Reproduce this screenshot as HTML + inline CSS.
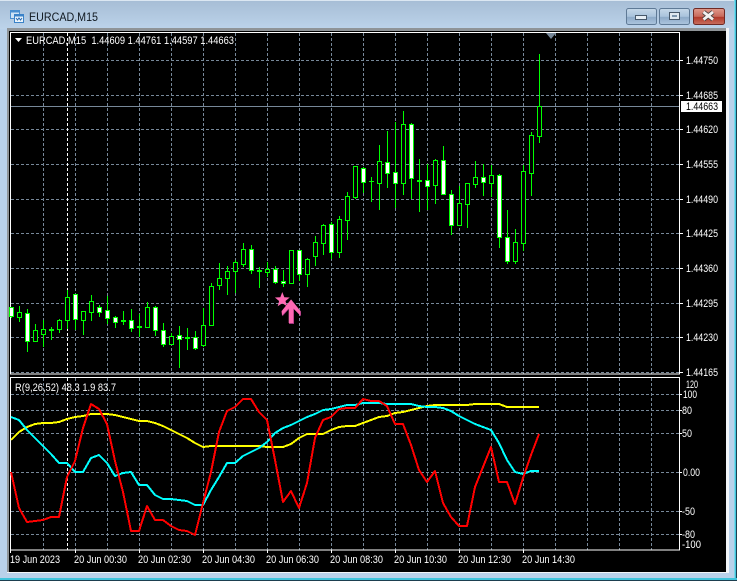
<!DOCTYPE html>
<html><head><meta charset="utf-8"><style>
html,body{margin:0;padding:0;background:#b9d1ea}
svg{display:block}
text{font-family:"Liberation Sans",sans-serif;font-size:11px;fill:#fff}
</style></head><body>
<svg width="737" height="581" viewBox="0 0 737 581" xmlns="http://www.w3.org/2000/svg">
<defs>
<linearGradient id="t" x1="0" y1="0" x2="0" y2="1"><stop offset="0" stop-color="#a6bdd5"/><stop offset="1" stop-color="#bcd3ea"/></linearGradient>
<linearGradient id="b1" x1="0" y1="0" x2="0" y2="1"><stop offset="0" stop-color="#c6d8e9"/><stop offset=".5" stop-color="#a9c3dc"/><stop offset=".55" stop-color="#8daac8"/><stop offset="1" stop-color="#adc6de"/></linearGradient>
<linearGradient id="b2" x1="0" y1="0" x2="0" y2="1"><stop offset="0" stop-color="#e09a8c"/><stop offset=".5" stop-color="#c86a5c"/><stop offset=".55" stop-color="#b2392a"/><stop offset="1" stop-color="#c8705f"/></linearGradient>
</defs>
<rect width="737" height="581" fill="#b9d1ea"/>
<rect width="737" height="29" fill="url(#t)"/>
<rect x="0" y="0" width="737" height="1" fill="#dbe7f2"/>
<rect x="735" y="0" width="1" height="581" fill="#3fc4dc"/>
<rect x="734" y="0" width="1" height="581" fill="#7fd6e8"/>
<rect x="736" y="0" width="1" height="581" fill="#1d3f50"/>
<rect x="0" y="578" width="737" height="2" fill="#3fc4dc"/>
<rect x="0" y="580" width="737" height="1" fill="#1d3f50"/>
<rect x="7" y="28" width="722" height="545" fill="#f2f5f8"/>
<rect x="7" y="28" width="719" height="3" fill="#8f9498"/>
<rect x="7" y="28" width="2" height="544" fill="#8f9498"/>
<rect x="9" y="31" width="717" height="541" fill="#000"/>

<!-- title -->
<g>
<rect x="10.5" y="10.5" width="9" height="8" fill="#cfe3f5" stroke="#4a8fd0"/>
<rect x="10.5" y="10.5" width="9" height="2" fill="#4a8fd0"/>
<rect x="14.5" y="14.5" width="9" height="8" fill="#eaf4fc" stroke="#3a82c8"/>
<rect x="14.5" y="14.5" width="9" height="2" fill="#3a82c8"/>
<path d="M16 18l1.500 2 1.500-2 1.500 2 1.500-2" fill="none" stroke="#2a6ab0"/>
</g>
<text x="29" y="21" textLength="69" lengthAdjust="spacingAndGlyphs" style="font-size:12px;fill:#101820">EURCAD,M15</text>
<rect x="626.500" y="8.500" width="30" height="16" rx="2" fill="url(#b1)" stroke="#5f7a96"/>
<rect x="635.500" y="15.500" width="11" height="4" fill="#e6eef5" stroke="#47586a"/>
<rect x="659.500" y="8.500" width="30" height="16" rx="2" fill="url(#b1)" stroke="#5f7a96"/>
<rect x="669.500" y="12.500" width="10" height="7" fill="#dfe8f0" stroke="#47586a"/>
<rect x="672" y="15" width="5" height="2" fill="#7d96ae"/>
<rect x="693.500" y="8.500" width="31" height="16" rx="2" fill="url(#b2)" stroke="#6f2a25"/>
<path d="M703.500 12l9.500 7.500M713 12l-9.500 7.500" stroke="#47403f" stroke-width="4.600" fill="none"/>
<path d="M703.500 12l9.500 7.500M713 12l-9.500 7.500" stroke="#f2f0ef" stroke-width="2.800" fill="none"/>

<!-- grid -->
<g stroke="#778899" stroke-width="1" stroke-dasharray="3 2" fill="none">
<path d="M11 60.500H679M11 95.500H679M11 129.500H679M11 164.500H679M11 199.500H679M11 233.500H679M11 268.500H679M11 303.500H679M11 337.500H679M11 372.500H679"/>
<path d="M11 394.500H679M11 410.500H679M11 433.500H679M11 472.500H679M11 511.500H679M11 534.500H679"/>
<path d="M43.500 33V374M107.500 33V374M75.500 33V374M139.500 33V374M171.500 33V374M203.500 33V374M235.500 33V374M267.500 33V374M299.500 33V374M331.500 33V374M363.500 33V374M395.500 33V374M427.500 33V374M459.500 33V374M491.500 33V374M523.500 33V374M555.500 33V374M587.500 33V374M619.500 33V374M651.500 33V374"/>
<path d="M43.500 378V550M107.500 378V550M75.500 378V550M139.500 378V550M171.500 378V550M203.500 378V550M235.500 378V550M267.500 378V550M299.500 378V550M331.500 378V550M363.500 378V550M395.500 378V550M427.500 378V550M459.500 378V550M491.500 378V550M523.500 378V550M555.500 378V550M587.500 378V550M619.500 378V550M651.500 378V550"/>
</g>
<path d="M67.500 33V374M67.500 378V550" stroke="#fff" stroke-dasharray="3 2" fill="none"/>
<rect x="11" y="106" width="668" height="1" fill="#778899"/>

<!-- frames -->
<g fill="none" stroke="#fff">
<rect x="10.500" y="32.500" width="669" height="341.500"/>
<rect x="10.500" y="377.500" width="669" height="172.500"/>
<path d="M680 60.500h3M680 95.500h3M680 129.500h3M680 164.500h3M680 199.500h3M680 233.500h3M680 268.500h3M680 303.500h3M680 337.500h3M680 372.500h3M680 394.500h2M680 410.500h2M680 433.500h2M680 472.500h2M680 511.500h2M680 534.500h2M10.500 550v3M75.500 550v3M139.500 550v3M203.500 550v3M267.500 550v3M331.500 550v3M395.500 550v3M459.500 550v3M523.500 550v3"/>
</g>
<path d="M546 33h10l-5 6z" fill="#778899"/>

<!-- candle wicks -->
<path stroke="#00ff00" stroke-width="1" fill="none" d="M11.500 316v2M19.500 306v16M27.500 309v43M35.500 324v17M43.500 320v27M51.500 327v13M59.500 319v14M67.500 290v39M75.500 294v36M83.500 311v24M91.500 295v26M99.500 305v12M107.500 296v28M115.500 316v12M123.500 311v14M131.500 309v23M139.500 314v23M147.500 302v25M155.500 306v30M163.500 323v24M171.500 333v11M179.500 326v42M187.500 328v22M195.500 331v19M203.500 308v39M211.500 283v43M219.500 263v27M227.500 266v29M235.500 260v33M243.500 243v24M251.500 245v29M259.500 267v21M267.500 262v15M275.500 266v18M283.500 270v17M291.500 250v34M299.500 250v31M307.500 258v29M315.500 236v30M323.500 224v31M331.500 222v37M339.500 216v42M347.500 192v48M355.500 166v33M363.500 167v26M371.500 177v25M379.500 145v65M387.500 131v57M395.500 122v86M403.500 111v84M411.500 123v76M419.500 159v53M427.500 164v46M435.500 159v45M443.500 146v48M451.500 190v45M459.500 186v40M467.500 183v45M475.500 161v27M483.500 164v32M491.500 165v32M499.500 174v74M507.500 210v54M515.500 229v35M523.500 165v86M531.500 132v64M539.500 54v89"/>
<!-- black bodies -->
<g fill="#000" stroke="#00ff00">
<rect x="17.500" y="312.500" width="4" height="5"/>
<rect x="33.500" y="330.500" width="4" height="11"/>
<rect x="41.500" y="329.500" width="4" height="5"/>
<rect x="57.500" y="320.500" width="4" height="9"/>
<rect x="65.500" y="297.500" width="4" height="23"/>
<rect x="81.500" y="311.500" width="4" height="9"/>
<rect x="89.500" y="301.500" width="4" height="11"/>
<rect x="145.500" y="307.500" width="4" height="20"/>
<rect x="169.500" y="336.500" width="4" height="8"/>
<rect x="201.500" y="325.500" width="4" height="20"/>
<rect x="209.500" y="286.500" width="4" height="39"/>
<rect x="217.500" y="278.500" width="4" height="7"/>
<rect x="225.500" y="271.500" width="4" height="7"/>
<rect x="233.500" y="262.500" width="4" height="9"/>
<rect x="241.500" y="249.500" width="4" height="15"/>
<rect x="265.500" y="269.500" width="4" height="3"/>
<rect x="289.500" y="250.500" width="4" height="33"/>
<rect x="305.500" y="259.500" width="4" height="15"/>
<rect x="313.500" y="242.500" width="4" height="14"/>
<rect x="321.500" y="225.500" width="4" height="18"/>
<rect x="337.500" y="219.500" width="4" height="33"/>
<rect x="345.500" y="196.500" width="4" height="24"/>
<rect x="353.500" y="166.500" width="4" height="31"/>
<rect x="377.500" y="161.500" width="4" height="22"/>
<rect x="401.500" y="124.500" width="4" height="59"/>
<rect x="433.500" y="160.500" width="4" height="25"/>
<rect x="457.500" y="203.500" width="4" height="22"/>
<rect x="465.500" y="183.500" width="4" height="21"/>
<rect x="473.500" y="177.500" width="4" height="7"/>
<rect x="489.500" y="175.500" width="4" height="8"/>
<rect x="513.500" y="242.500" width="4" height="19"/>
<rect x="521.500" y="171.500" width="4" height="72"/>
<rect x="529.500" y="135.500" width="4" height="38"/>
<rect x="537.500" y="106.500" width="4" height="30"/>
</g>
<!-- white bodies -->
<g fill="#fff" stroke="#00ff00">
<rect x="9.500" y="307.500" width="4" height="9"/>
<rect x="25.500" y="313.500" width="4" height="28"/>
<rect x="73.500" y="294.500" width="4" height="25"/>
<rect x="97.500" y="307.500" width="4" height="5"/>
<rect x="105.500" y="310.500" width="4" height="8"/>
<rect x="113.500" y="317.500" width="4" height="5"/>
<rect x="129.500" y="320.500" width="4" height="8"/>
<rect x="153.500" y="307.500" width="4" height="23"/>
<rect x="161.500" y="330.500" width="4" height="14"/>
<rect x="177.500" y="335.500" width="4" height="4"/>
<rect x="193.500" y="337.500" width="4" height="11"/>
<rect x="249.500" y="249.500" width="4" height="21"/>
<rect x="273.500" y="269.500" width="4" height="13"/>
<rect x="281.500" y="281.500" width="4" height="2"/>
<rect x="297.500" y="250.500" width="4" height="24"/>
<rect x="329.500" y="224.500" width="4" height="28"/>
<rect x="361.500" y="168.500" width="4" height="14"/>
<rect x="385.500" y="162.500" width="4" height="11"/>
<rect x="393.500" y="172.500" width="4" height="11"/>
<rect x="409.500" y="124.500" width="4" height="54"/>
<rect x="425.500" y="180.500" width="4" height="6"/>
<rect x="441.500" y="160.500" width="4" height="34"/>
<rect x="449.500" y="194.500" width="4" height="31"/>
<rect x="481.500" y="177.500" width="4" height="5"/>
<rect x="497.500" y="175.500" width="4" height="62"/>
<rect x="505.500" y="237.500" width="4" height="24"/>
</g>
<!-- doji -->
<g fill="#00ff00">
<rect x="49" y="329" width="5" height="2"/>
<rect x="121" y="320" width="5" height="2"/>
<rect x="137" y="326" width="5" height="2"/>
<rect x="185" y="337" width="5" height="2"/>
<rect x="257" y="270" width="5" height="2"/>
<rect x="369" y="181" width="5" height="1"/>
<rect x="417" y="180" width="5" height="2"/>
</g>
<!-- star + arrow -->
<path d="M282.300 292l2 5.200 5.400.3-4.200 3.500 1.400 5.300-4.600-3-4.600 3 1.400-5.300-4.200-3.500 5.400-.3z" fill="#ff69b4"/>
<path d="M289 324V309L282.500 316.200 281.500 311.500 291.300 299.500 301 311.500 301 316.200 294 309V324z" fill="#a0357e"/>
<path d="M288.700 323V308.500L282 315.500 281.700 311 291 299.500 300.300 311 300.300 315.500 293.300 308.500V323z" fill="#ff69b4"/>

<!-- lines -->
<g fill="none" stroke-width="2" stroke-linejoin="round" shape-rendering="crispEdges">
<polyline stroke="#ffff00" points="11,440 19,432 27,427 35,424 43,423 51,423 59,422 67,419 75,417 83,416 91,414 99,414 107,414 115,415 123,417 131,419 139,421 147,421 155,423 163,426 171,430 179,434 187,438 195,443 203,447 211,446 219,446 227,446 235,446 243,446 251,446 259,446 267,447 275,447 283,447 291,444 299,438 307,434 315,434 323,434 331,430 339,427 347,426 355,426 363,423 371,420 379,417 387,416 395,413 403,412 411,410 419,408 427,406 435,405 443,405 451,405 459,405 467,405 475,404 483,404 491,404 499,404 507,407 515,407 523,407 531,407 539,407"/>
<polyline stroke="#00ffff" points="11,417 19,420 27,430 35,438 43,446 51,454 59,463 67,463 75,472 83,472 91,458 99,455 107,463 115,476 123,473 131,472 139,485 147,485 155,495 163,499 171,499 179,500 187,501 195,505 203,505 211,490 219,477 227,463 235,463 243,456 251,452 259,448 267,442 275,433 283,428 291,425 299,421 307,417 315,414 323,410 331,409 339,407 347,405 355,405 363,403 371,403 379,403 387,404 395,404 403,404 411,404 419,406 427,407 435,407 443,408 451,411 459,416 467,420 475,424 483,427 491,430 499,443 507,460 515,472 523,474 531,471 539,471"/>
<polyline stroke="#ff0000" points="11,472 19,508 27,522 35,521 43,520 51,517 59,517 67,477 75,461 83,428 91,404 99,409 107,424 115,461 123,492 131,531 139,531 147,506 155,520 163,520 171,526 179,530 187,531 195,535 203,503 211,472 219,432 227,411 235,407 243,399 251,399 259,412 267,420 275,460 283,502 291,491 299,508 307,483 315,438 323,420 331,417 339,409 347,408 355,408 363,399 371,401 379,401 387,406 395,424 403,424 411,445 419,470 427,482 435,471 443,503 451,517 459,526 467,526 475,487 483,467 491,447 499,482 507,482 515,504 523,478 531,455 539,434"/>
</g>

<!-- header text -->
<path d="M15 38h7l-3.500 4z" fill="#fff"/>
<text x="26" y="44" textLength="208" lengthAdjust="spacingAndGlyphs" xml:space="preserve">EURCAD,M15  1.44609 1.44761 1.44597 1.44663</text>
<text x="15" y="391" textLength="101" lengthAdjust="spacingAndGlyphs">R(9,26,52) 48.3 1.9 83.7</text>

<!-- price axis -->
<g>
<text x="686" y="64" textLength="32" lengthAdjust="spacingAndGlyphs">1.44750</text>
<text x="686" y="99" textLength="32" lengthAdjust="spacingAndGlyphs">1.44685</text>
<text x="686" y="133" textLength="32" lengthAdjust="spacingAndGlyphs">1.44620</text>
<text x="686" y="168" textLength="32" lengthAdjust="spacingAndGlyphs">1.44555</text>
<text x="686" y="203" textLength="32" lengthAdjust="spacingAndGlyphs">1.44490</text>
<text x="686" y="237" textLength="32" lengthAdjust="spacingAndGlyphs">1.44425</text>
<text x="686" y="272" textLength="32" lengthAdjust="spacingAndGlyphs">1.44360</text>
<text x="686" y="307" textLength="32" lengthAdjust="spacingAndGlyphs">1.44295</text>
<text x="686" y="341" textLength="32" lengthAdjust="spacingAndGlyphs">1.44230</text>
<text x="686" y="376" textLength="32" lengthAdjust="spacingAndGlyphs">1.44165</text>
</g>
<rect x="681" y="101" width="41" height="11" fill="#fff"/>
<text x="686" y="110" textLength="32" lengthAdjust="spacingAndGlyphs" style="fill:#000">1.44663</text>

<!-- sub axis -->
<text x="686" y="388" textLength="12" lengthAdjust="spacingAndGlyphs">120</text>
<text x="683" y="398" textLength="14" lengthAdjust="spacingAndGlyphs">100</text>
<text x="682" y="414" textLength="10" lengthAdjust="spacingAndGlyphs">80</text>
<text x="682" y="437" textLength="10" lengthAdjust="spacingAndGlyphs">50</text>
<text x="683" y="476" textLength="17" lengthAdjust="spacingAndGlyphs">0.00</text>
<text x="682" y="515" textLength="13" lengthAdjust="spacingAndGlyphs">-50</text>
<text x="682" y="538" textLength="13" lengthAdjust="spacingAndGlyphs">-80</text>
<text x="682" y="548" textLength="19" lengthAdjust="spacingAndGlyphs">-100</text>

<!-- time axis -->
<text x="10" y="563" textLength="50" lengthAdjust="spacingAndGlyphs">19 Jun 2023</text>
<text x="74" y="563" textLength="53" lengthAdjust="spacingAndGlyphs">20 Jun 00:30</text>
<text x="138" y="563" textLength="53" lengthAdjust="spacingAndGlyphs">20 Jun 02:30</text>
<text x="202" y="563" textLength="53" lengthAdjust="spacingAndGlyphs">20 Jun 04:30</text>
<text x="266" y="563" textLength="53" lengthAdjust="spacingAndGlyphs">20 Jun 06:30</text>
<text x="330" y="563" textLength="53" lengthAdjust="spacingAndGlyphs">20 Jun 08:30</text>
<text x="394" y="563" textLength="53" lengthAdjust="spacingAndGlyphs">20 Jun 10:30</text>
<text x="458" y="563" textLength="53" lengthAdjust="spacingAndGlyphs">20 Jun 12:30</text>
<text x="522" y="563" textLength="53" lengthAdjust="spacingAndGlyphs">20 Jun 14:30</text>
</svg>
</body></html>
